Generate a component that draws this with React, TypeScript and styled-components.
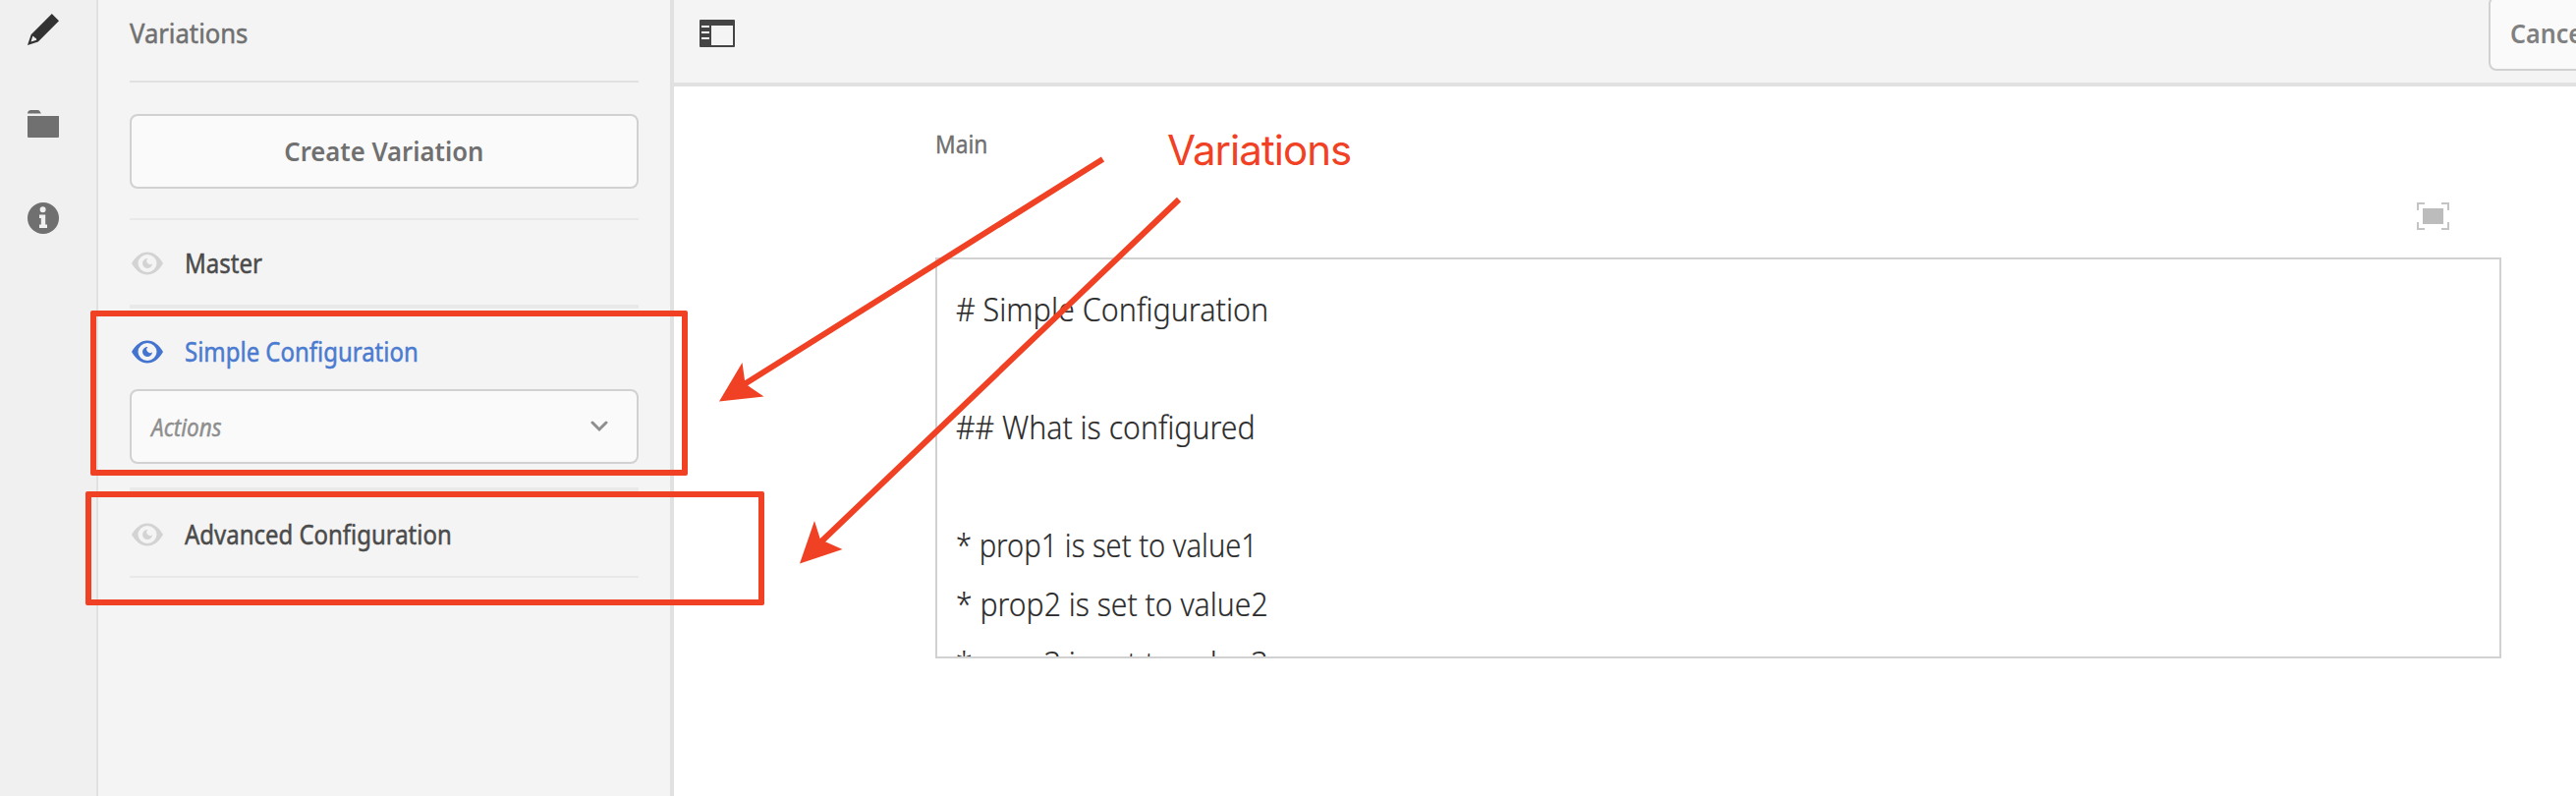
import React from "react";
import styled, { createGlobalStyle } from "styled-components";

const RED = "#f04124";

const Global = createGlobalStyle`
  * { box-sizing: border-box; }
  body {
    margin: 0;
    background: #fff;
    overflow: hidden;
    font-family: "Noto Sans", "Open Sans", sans-serif;
  }
`;

const Page = styled.div`
  position: relative;
  display: flex;
  width: 100%;
  height: 810px;
  overflow: hidden;
`;

const Rail = styled.nav`
  flex: none;
  width: 100px;
  padding: 14px 0 0 28px;
  display: flex;
  flex-direction: column;
  gap: 64px;
  background: #f0f0f0;
  border-right: 2px solid #e1e1e1;
`;

const RailIcon = styled.svg`
  display: block;
  flex: none;
  width: 32px;
  height: 32px;
`;

const SidePanel = styled.aside`
  flex: none;
  width: 586px;
  padding: 0 32px;
  background: #f4f4f4;
  border-right: 4px solid #e1e1e1;
`;

/* Narrows the face horizontally so labels keep their compact width. */
const Label = styled.span<{ $scale: number; $center?: boolean }>`
  display: inline-block;
  white-space: pre;
  transform: scaleX(${(p) => p.$scale});
  transform-origin: ${(p) => (p.$center ? "center" : "left")};
`;

const PanelTitle = styled.h2`
  margin: 0;
  height: 84px;
  border-bottom: 2px solid #e1e1e1;
  font-size: 27px;
  font-weight: 400;
  line-height: 67px;
  color: #707070;
  -webkit-text-stroke: 0.5px currentColor;
`;

const CreateButton = styled.button`
  display: block;
  width: 100%;
  height: 76px;
  margin: 32px 0 30px;
  padding: 0;
  border: 2px solid #d1d1d1;
  border-radius: 8px;
  background: #fafafa;
  color: #707070;
  font: 600 27px/72px "Noto Sans", sans-serif;
`;

const VariationList = styled.ul`
  margin: 0;
  padding: 0;
  list-style: none;
  border-top: 2px solid #e9e9e9;
`;

const VariationItem = styled.li<{ $last?: boolean }>`
  border-bottom: ${(p) => (p.$last ? 2 : 4)}px solid #e9e9e9;
`;

const VariationHead = styled.div<{ $active?: boolean }>`
  display: flex;
  align-items: center;
  gap: 22px;
  height: ${(p) => (p.$active ? 82 : 86)}px;
  padding: ${(p) => (p.$active ? 6 : 2)}px 0 0 2px;
  font-size: 27px;
  line-height: 40px;
  color: ${(p) => (p.$active ? "#4b7bd0" : "#4b4b4b")};
  -webkit-text-stroke: 0.5px currentColor;
`;

const EyeSvg = styled.svg<{ $active?: boolean }>`
  flex: none;
  width: 32px;
  height: 24px;
  fill: ${(p) => (p.$active ? "#4374cf" : "#d3d3d3")};
  stroke: none;
`;

const Select = styled.div`
  display: flex;
  align-items: center;
  justify-content: space-between;
  height: 76px;
  margin-bottom: 24px;
  padding: 0 29px 0 20px;
  border: 2px solid #d1d1d1;
  border-radius: 8px;
  background: #fafafa;
  font-size: 25px;
  font-style: italic;
  color: #8e8e8e;
  -webkit-text-stroke: 0.4px currentColor;
`;

const Main = styled.main`
  flex: 1;
  min-width: 0;
`;

const TopBar = styled.header`
  display: flex;
  align-items: flex-start;
  justify-content: space-between;
  height: 88px;
  padding-left: 26px;
  overflow: hidden;
  background: #f4f4f4;
  border-bottom: 4px solid #e1e1e1;
`;

const ToggleIcon = styled.svg`
  width: 36px;
  height: 28px;
  margin-top: 20px;
`;

const CancelButton = styled.button`
  flex: none;
  width: 128px;
  height: 76px;
  margin: -4px -39px 0 0;
  padding: 0 0 0 20px;
  border: 2px solid #d1d1d1;
  border-radius: 8px;
  background: #fafafa;
  color: #808080;
  text-align: left;
  white-space: nowrap;
  font: 600 27px/72px "Noto Sans", sans-serif;
`;

const Editor = styled.section`
  width: 1594px;
  margin-left: 266px;
  padding-top: 38px;
`;

const FieldLabel = styled.div`
  height: 40px;
  font-size: 25px;
  line-height: 40px;
  color: #707070;
  -webkit-text-stroke: 0.4px currentColor;
`;

const EditorTools = styled.div`
  display: flex;
  justify-content: flex-end;
  height: 96px;
  padding: 40px 53px 0 0;
`;

const TextBox = styled.div`
  height: 408px;
  padding: 20px 19px 0;
  overflow: hidden;
  border: 2px solid #d1d1d1;
  background: #fff;
  color: #2c2c2c;
  font-size: 33.5px;
  font-weight: 300;
  line-height: 60px;
  -webkit-text-stroke: 0.2px currentColor;
`;

const TextLine = styled.div`
  height: 60px;
`;

const Highlight = styled.div<{ $x: number; $y: number; $w: number; $h: number }>`
  position: absolute;
  left: ${(p) => p.$x}px;
  top: ${(p) => p.$y}px;
  width: ${(p) => p.$w}px;
  height: ${(p) => p.$h}px;
  border: 6px solid ${RED};
  border-radius: 2px;
`;

const Arrows = styled.svg`
  position: absolute;
  left: 0;
  top: 0;
  width: 1300px;
  height: 600px;
`;

const Callout = styled.div`
  position: absolute;
  left: 1188px;
  top: 126px;
  font-family: Inter, sans-serif;
  font-size: 42px;
  line-height: 54px;
  letter-spacing: -0.95px;
  color: ${RED};
`;

const Eye = ({ active }: { active?: boolean }) => (
  <EyeSvg $active={active} viewBox="0 0 32 24">
    <path
      fillRule="evenodd"
      d="M0 12C4 5 9.500.5 16 .5S28 5 32 12C28 19 22.500 23.500 16 23.500S4 19 0 12ZM16 3A9.500 9 0 0 0 16 21A9.500 9 0 0 0 16 3Z"
    />
    <path d="M16.500 7A5 5 0 1 0 21 12.200A3.300 3.300 0 0 1 16.500 7Z" />
  </EyeSvg>
);

const LINES: [string, number][] = [
  ["# Simple Configuration", 0.91],
  ["", 1],
  ["## What is configured", 0.903],
  ["", 1],
  ["* prop1 is set to value1", 0.87],
  ["* prop2 is set to value2", 0.9],
  ["* prop3 is set to value3", 0.9],
];

export default function App() {
  return (
    <>
      <Global />
      <Page>
        <Rail>
          <RailIcon viewBox="0 0 32 32" fill="#323232">
            <path d="M24.800 0L32 7.200L10.800 28.400L0 32L3.600 21.200ZM5.300 22.800L3.500 28.500L9.200 26.700C9.200 25 8.200 24 6.800 24.200C7 23.500 6.300 22.700 5.300 22.800Z" fillRule="evenodd" />
          </RailIcon>
          <RailIcon viewBox="0 0 32 32" fill="#707070">
            <path d="M0 5.500C0 3.500 1.500 2 3.500 2H10.500C12 2 12.800 3.500 13.800 5.500ZM0 8H32V29Q32 30 31 30H1Q0 30 0 29Z" />
          </RailIcon>
          <RailIcon viewBox="0 0 32 32" fill="#707070">
            <path fillRule="evenodd" d="M16 0A16 16 0 1 1 16 32A16 16 0 1 1 16 0ZM15.600 4.200A3 3 0 1 0 15.600 10.200A3 3 0 1 0 15.600 4.200ZM12 12.500V16H13.800V22.500H12V26H20V22.500H18.200V12.500Z" />
          </RailIcon>
        </Rail>
        <SidePanel>
          <PanelTitle>
            <Label $scale={0.95}>Variations</Label>
          </PanelTitle>
          <CreateButton>
            <Label $scale={0.95} $center>Create Variation</Label>
          </CreateButton>
          <VariationList>
            <VariationItem>
              <VariationHead>
                <Eye />
                <Label $scale={0.89}>Master</Label>
              </VariationHead>
            </VariationItem>
            <VariationItem>
              <VariationHead $active>
                <Eye active />
                <Label $scale={0.887}>Simple Configuration</Label>
              </VariationHead>
              <Select>
                <Label $scale={0.9}>Actions</Label>
                <svg width="18" height="12" viewBox="0 0 18 12" fill="none" stroke="#8e8e8e" strokeWidth="3">
                  <path d="M2 2L9 9L16 2" strokeLinecap="round" />
                </svg>
              </Select>
            </VariationItem>
            <VariationItem $last>
              <VariationHead>
                <Eye />
                <Label $scale={0.887}>Advanced Configuration</Label>
              </VariationHead>
            </VariationItem>
          </VariationList>
        </SidePanel>
        <Main>
          <TopBar>
            <ToggleIcon viewBox="0 0 36 28">
              <path
                fill="#444"
                fillRule="evenodd"
                d="M1 0H35Q36 0 36 1V27Q36 28 35 28H1Q0 28 0 27V1Q0 0 1 0ZM12 6V26H34V6ZM2 6V8H10V6ZM2 12V14H10V12ZM2 18V20H10V18Z"
              />
            </ToggleIcon>
            <CancelButton>
              <Label $scale={0.93}>Cancel</Label>
            </CancelButton>
          </TopBar>
          <Editor>
            <FieldLabel>
              <Label $scale={0.91}>Main</Label>
            </FieldLabel>
            <EditorTools>
              <svg width="33" height="28" viewBox="0 0 33 28">
                <path d="M6 6H27V22H6Z" fill="#bcbcbc" />
                <path d="M1 8V1H8M25 1H32V8M32 20V27H25M8 27H1V20" fill="none" stroke="#c4c4c4" strokeWidth="2" />
              </svg>
            </EditorTools>
            <TextBox>
              {LINES.map(([text, scale], i) => (
                <TextLine key={i}>
                  <Label $scale={scale}>{text}</Label>
                </TextLine>
              ))}
            </TextBox>
          </Editor>
        </Main>
        <Highlight $x={92} $y={316} $w={608} $h={168} />
        <Highlight $x={87} $y={500} $w={691} $h={116} />
        <Arrows viewBox="0 0 1300 600" fill={RED}>
          <path d="M1122.500 162L756 392M1200 203L834 553" stroke={RED} strokeWidth="6" />
          <path d="M732 408.500L755.500 369L758.500 390.500L777.500 403.500Z" />
          <path d="M814 573.500L829 530L835 549L857.500 559Z" />
        </Arrows>
        <Callout>Variations</Callout>
      </Page>
    </>
  );
}
